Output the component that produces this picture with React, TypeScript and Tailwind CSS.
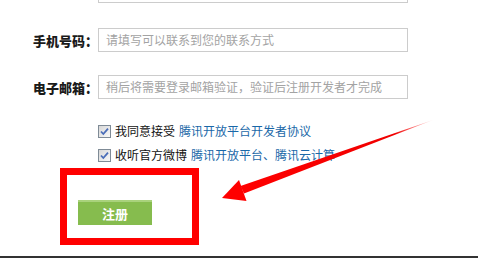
import React from "react";

const font = { fontFamily: '"Noto Sans CJK SC", "Noto Sans", sans-serif' };

function Field({ label, placeholder }: { label: string; placeholder: string }) {
  return (
    <div className="flex items-center">
      <div className="w-[98px] text-right text-[13px] font-black text-[#1a1a1a] leading-none">{label}</div>
      <div className="w-[310px] h-[24px] border border-[#cccccc] bg-white flex items-center pl-[7px] text-[12px] text-[#a3a3a3] leading-none">
        {placeholder}
      </div>
    </div>
  );
}

function Check() {
  return (
    <svg width="13" height="13" viewBox="0 0 13 13" className="shrink-0">
      <defs>
        <linearGradient id="cb" x1="0" y1="0" x2="1" y2="1">
          <stop offset="0" stopColor="#d6d6d6" />
          <stop offset="1" stopColor="#fafafa" />
        </linearGradient>
      </defs>
      <rect x="0.5" y="0.5" width="12" height="12" fill="url(#cb)" stroke="#7f8b96" />
      <path d="M3 6.5 L5.3 9 L10 3.6" fill="none" stroke="#4a6db8" strokeWidth="1.8" />
    </svg>
  );
}

function CheckRow({ text, link }: { text: string; link: string }) {
  return (
    <div className="flex items-center h-[18px] pl-[98px] text-[12px] leading-none">
      <Check />
      <span className="ml-[4px] text-[#111]">{text}</span>
      <span className="ml-[4px] text-[#1a68a8]">{link}</span>
    </div>
  );
}

export default function App() {
  return (
    <div className="relative w-[478px] h-[258px] overflow-hidden bg-white border-b-2 border-[#333]" style={font}>
      <div className="-mt-[21px]">
        <Field label="" placeholder="" />
      </div>
      <div className="mt-[25px]">
        <Field label="手机号码：" placeholder="请填写可以联系到您的联系方式" />
      </div>
      <div className="mt-[23px]">
        <Field label="电子邮箱：" placeholder="稍后将需要登录邮箱验证，验证后注册开发者才完成" />
      </div>
      <div className="mt-[23px] flex flex-col gap-[6px]">
        <CheckRow text="我同意接受" link="腾讯开放平台开发者协议" />
        <CheckRow text="收听官方微博" link="腾讯开放平台、腾讯云计算" />
      </div>
      <div className="mt-[4px] ml-[60px] w-[139px] h-[77px] border-[7px] border-[#ff0000] pl-[11px] pt-[25px]">
        <div className="w-[74px] h-[25px] bg-[#86bc4e] border-t-2 border-[#a9d27c] flex items-center justify-center text-white text-[13px] font-bold leading-none">
          注册
        </div>
      </div>

      <svg className="absolute inset-0 pointer-events-none" width="478" height="258" viewBox="0 0 478 258">
        <defs>
          <linearGradient id="shaft" x1="242" y1="190" x2="433" y2="120" gradientUnits="userSpaceOnUse">
            <stop offset="0" stopColor="#ff0000" />
            <stop offset="0.8" stopColor="#f00000" />
            <stop offset="1" stopColor="#ff0000" stopOpacity="0.1" />
          </linearGradient>
        </defs>
        <polygon points="240.5,186 244,193.5 433,120" fill="url(#shaft)" />
        <polygon points="222,198 239,180 246.5,201" fill="#ff0000" />
      </svg>
    </div>
  );
}
